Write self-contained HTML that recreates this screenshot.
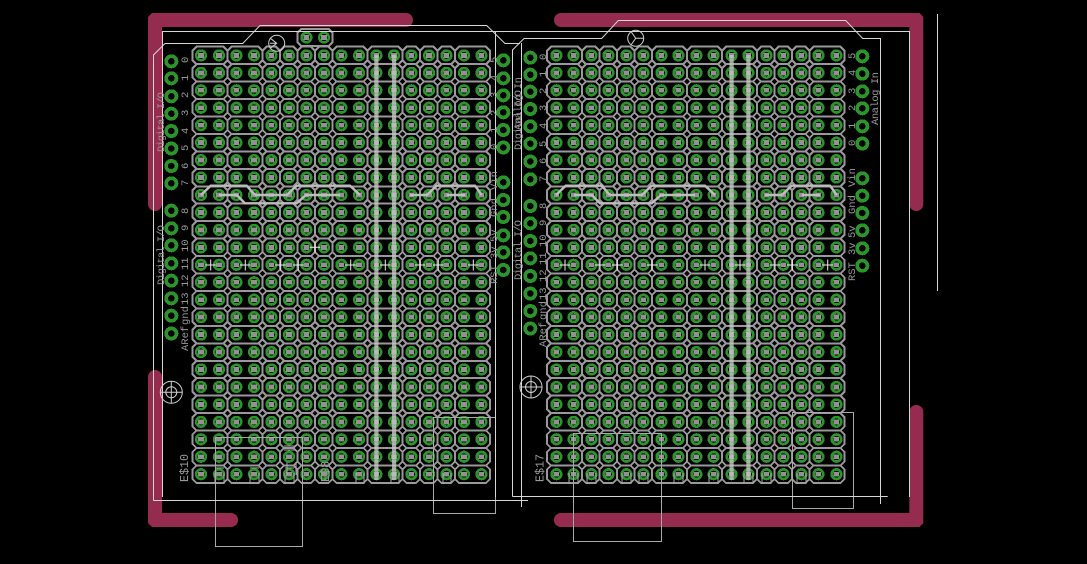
<!DOCTYPE html>
<html>
<head>
<meta charset="utf-8">
<style>
html,body{margin:0;padding:0;background:#000;width:1087px;height:564px;overflow:hidden}
svg{display:block}
text{font-family:"Liberation Mono",monospace;fill:#9a9a9a;font-size:10.5px}
</style>
</head>
<body>
<svg width="1087" height="564" viewBox="0 0 1087 564" xmlns="http://www.w3.org/2000/svg">
<rect width="1087" height="564" fill="#000"/>
<defs>
<g id="p"><circle r="6.1" fill="#2a962a"/><circle r="3.5" fill="#000"/><rect x="-2.8" y="-2.4" width="5.6" height="4.8" fill="#929292"/></g>
<g id="h"><circle r="7" fill="#2a962a"/><circle r="3.3" fill="#000"/></g>
<path id="o2" d="M4-8.725h27l4 4v9.45l-4 4h-27l-4-4v-9.45z" fill="none" stroke="#999" stroke-width="2"/>
<path id="o1" d="M4-8.725h9.5l4 4v9.45l-4 4h-9.5l-4-4v-9.45z" fill="none" stroke="#999" stroke-width="2"/>
<path id="c" d="M-5.5 0h11M0-5.5v11" stroke="#eee" stroke-width="1" fill="none"/>
<g id="row">
<use href="#o2" x="192.5"/><use href="#o2" x="227.5"/><use href="#o1" x="262.5"/><use href="#o1" x="280"/><use href="#o1" x="297.5"/><use href="#o1" x="315"/><use href="#o2" x="332.5"/><use href="#o2" x="367.5"/><use href="#o1" x="402.5"/><use href="#o1" x="420"/><use href="#o1" x="437.5"/><use href="#o2" x="455"/>
<use href="#o2" x="547"/><use href="#o1" x="582"/><use href="#o1" x="599.5"/><use href="#o1" x="617"/><use href="#o1" x="634.5"/><use href="#o2" x="652"/><use href="#o2" x="687"/><use href="#o2" x="722"/><use href="#o1" x="757"/><use href="#o1" x="774.5"/><use href="#o1" x="792"/><use href="#o2" x="809.5"/>
<use href="#p" x="201"/><use href="#p" x="219"/><use href="#p" x="236.4"/><use href="#p" x="254"/><use href="#p" x="271.4"/><use href="#p" x="289"/><use href="#p" x="306.4"/><use href="#p" x="324"/><use href="#p" x="341.4"/><use href="#p" x="359"/><use href="#p" x="376.4"/><use href="#p" x="394"/><use href="#p" x="411.4"/><use href="#p" x="429"/><use href="#p" x="446.4"/><use href="#p" x="464"/><use href="#p" x="481.4"/>
<use href="#p" x="556.4"/><use href="#p" x="573.6"/><use href="#p" x="591.4"/><use href="#p" x="608.4"/><use href="#p" x="626.4"/><use href="#p" x="643.4"/><use href="#p" x="661.4"/><use href="#p" x="678.4"/><use href="#p" x="696.4"/><use href="#p" x="713.6"/><use href="#p" x="731.6"/><use href="#p" x="748.4"/><use href="#p" x="766.4"/><use href="#p" x="783.4"/><use href="#p" x="801.4"/><use href="#p" x="818.4"/><use href="#p" x="836.4"/>
</g>
<g id="wires" fill="none" stroke="#bdbdbd" stroke-width="2.4">
<path d="M201 195L210.7 185.7H246.7L255 195"/>
<path d="M219 195H236.7L245 203.3H296.7L306 195H340"/>
<path d="M255 195H286.7L296.7 185.7H350L360 195"/>
<path d="M410 195H426.7L436.7 185.7H475L481.7 195"/>
<path d="M446.7 195H465"/>
</g>
</defs>

<!-- maroon dimension layer -->
<g fill="none" stroke="#952b4e" stroke-width="14" stroke-linecap="round" stroke-linejoin="miter">
<path d="M155 204V20H406"/>
<path d="M155 377V520H231"/>
<path d="M561 20H916.3V204"/>
<path d="M916.3 412V520H561"/>
</g>
<g fill="#000">
<polygon points="148,13 152,13 148,17"/>
<polygon points="148,527 152,527 148,523"/>
<polygon points="923.5,13 919.5,13 923.5,17"/>
<polygon points="923.5,527 919.5,527 923.5,523"/>
</g>

<!-- board grid -->
<g shape-rendering="crispEdges">
<use href="#row" y="55.4"/><use href="#row" y="72.85"/><use href="#row" y="90.3"/><use href="#row" y="107.75"/><use href="#row" y="125.2"/><use href="#row" y="142.65"/><use href="#row" y="160.1"/><use href="#row" y="177.55"/><use href="#row" y="195"/><use href="#row" y="212.45"/><use href="#row" y="229.9"/><use href="#row" y="247.35"/><use href="#row" y="264.8"/><use href="#row" y="282.25"/><use href="#row" y="299.7"/><use href="#row" y="317.15"/><use href="#row" y="334.6"/><use href="#row" y="352.05"/><use href="#row" y="369.5"/><use href="#row" y="386.95"/><use href="#row" y="404.4"/><use href="#row" y="421.85"/><use href="#row" y="439.3"/><use href="#row" y="456.75"/><use href="#row" y="474.2"/>
<use href="#o2" x="297.5" y="37.5"/><use href="#p" x="306.4" y="37.5"/><use href="#p" x="324" y="37.5"/>

<!-- side pads -->
<use href="#h" x="171.3" y="61.3"/><use href="#h" x="171.3" y="78.3"/><use href="#h" x="171.3" y="96.3"/><use href="#h" x="171.3" y="113.7"/><use href="#h" x="171.3" y="131"/><use href="#h" x="171.3" y="148.5"/><use href="#h" x="171.3" y="166"/><use href="#h" x="171.3" y="183.3"/><use href="#h" x="171.3" y="210.7"/><use href="#h" x="171.3" y="228.3"/><use href="#h" x="171.3" y="245.3"/><use href="#h" x="171.3" y="263.3"/><use href="#h" x="171.3" y="280.7"/><use href="#h" x="171.3" y="298.3"/><use href="#h" x="171.3" y="315.7"/><use href="#h" x="171.3" y="333.5"/>
<use href="#h" x="503.3" y="60.3"/><use href="#h" x="503.3" y="78.3"/><use href="#h" x="503.3" y="95.3"/><use href="#h" x="503.3" y="112.3"/><use href="#h" x="503.3" y="130"/><use href="#h" x="503.3" y="147.5"/><use href="#h" x="503.3" y="182.3"/><use href="#h" x="503.3" y="200"/><use href="#h" x="503.3" y="217"/><use href="#h" x="503.3" y="235.3"/><use href="#h" x="503.3" y="252.3"/><use href="#h" x="503.3" y="270"/>
<use href="#h" x="530.3" y="57.7"/><use href="#h" x="530.3" y="74.7"/><use href="#h" x="530.3" y="91.7"/><use href="#h" x="530.3" y="109"/><use href="#h" x="530.3" y="126.3"/><use href="#h" x="530.3" y="143.7"/><use href="#h" x="530.3" y="161.5"/><use href="#h" x="530.3" y="179.3"/><use href="#h" x="530.3" y="206"/><use href="#h" x="530.3" y="223.3"/><use href="#h" x="530.3" y="241"/><use href="#h" x="530.3" y="258.3"/><use href="#h" x="530.3" y="276"/><use href="#h" x="530.3" y="293.5"/><use href="#h" x="530.3" y="311"/><use href="#h" x="530.3" y="328.5"/>
<use href="#h" x="862.3" y="56.3"/><use href="#h" x="862.3" y="73.7"/><use href="#h" x="862.3" y="91.3"/><use href="#h" x="862.3" y="108.3"/><use href="#h" x="862.3" y="126.3"/><use href="#h" x="862.3" y="143.5"/><use href="#h" x="862.3" y="178.3"/><use href="#h" x="862.3" y="195.7"/><use href="#h" x="862.3" y="213"/><use href="#h" x="862.3" y="230.3"/><use href="#h" x="862.3" y="248.3"/><use href="#h" x="862.3" y="265.7"/>
</g>

<!-- thick wires -->
<g fill="#c4c4c4" fill-opacity=".8">
<rect x="374.3" y="55" width="4.2" height="425"/>
<rect x="392" y="55" width="4.2" height="425"/>
<rect x="729.5" y="55" width="4.2" height="425"/>
<rect x="746.3" y="55" width="4.2" height="425"/>
</g>
<use href="#wires"/>
<use href="#wires" x="355"/>

<!-- crosses -->
<use href="#c" x="315" y="247.3"/>
<use href="#c" x="210.7" y="265"/><use href="#c" x="245.3" y="265"/><use href="#c" x="280.7" y="265"/><use href="#c" x="298.3" y="265"/><use href="#c" x="350.7" y="265"/><use href="#c" x="385.3" y="265"/><use href="#c" x="420" y="265"/><use href="#c" x="438.3" y="265"/><use href="#c" x="473.3" y="265"/>
<use href="#c" x="565" y="265"/><use href="#c" x="600" y="265"/><use href="#c" x="617.3" y="265"/><use href="#c" x="652" y="265"/><use href="#c" x="705" y="265"/><use href="#c" x="740" y="265"/><use href="#c" x="775" y="265"/><use href="#c" x="792.3" y="265"/><use href="#c" x="827.7" y="265"/>

<!-- component rectangles -->
<g fill="none" stroke="#a8a8a8" stroke-width="1">
<rect x="215.5" y="437.5" width="87" height="109"/>
<rect x="433.5" y="417.5" width="62" height="96"/>
<rect x="573.5" y="433.5" width="88" height="108"/>
<rect x="792.5" y="412.5" width="61" height="96"/>
</g>

<!-- thin outline lines -->
<g fill="none" stroke="#d6d6d6" stroke-width="1">
<path d="M162.5 497V31.5H909.5V497"/>
<path d="M153.5 500.5V55L165 43.5H242.7L260 25.5H486.7L505 43.5H520"/>
<path d="M153.5 500.5H528"/>
<path d="M495.5 32V497"/>
<path d="M521.5 43V507"/>
<path d="M512.5 496.5V50L524 38.5H601.7L618.3 20.5H845.7L862.7 38.5H880.5V504"/>
<path d="M512.5 496.5H887.7"/>
<path d="M937.5 14V291"/>
</g>

<!-- drill holes -->
<g fill="none" stroke="#cfcfcf" stroke-width="1">
<circle cx="171.3" cy="392.3" r="11"/><circle cx="171.3" cy="392.3" r="5.5"/><path d="M160 392.3H182.6M171.3 381V403.6"/>
<circle cx="531" cy="387" r="11"/><circle cx="531" cy="387" r="5.5"/><path d="M519.7 387H542.3M531 375.7V398.3"/>
<circle cx="276.7" cy="43.3" r="8"/><path d="M270 38L276.7 43.3L270 48.5M276.7 43.3L270 43.3"/>
<circle cx="635.7" cy="38.3" r="8"/><path d="M635.7 38.3L631 31.5M635.7 38.3L643.5 38.3M635.7 38.3L631 45"/>
</g>

<!-- labels: left board -->
<g>
<text transform="translate(164,152) rotate(-90)" textLength="60">Digital I/O</text>
<text transform="translate(164,285) rotate(-90)" textLength="60">Digital I/O</text>
<text transform="translate(188,63) rotate(-90)">0</text>
<text transform="translate(188,81) rotate(-90)">1</text>
<text transform="translate(188,98) rotate(-90)">2</text>
<text transform="translate(188,116) rotate(-90)">3</text>
<text transform="translate(188,134) rotate(-90)">4</text>
<text transform="translate(188,151) rotate(-90)">5</text>
<text transform="translate(188,169) rotate(-90)">6</text>
<text transform="translate(188,186) rotate(-90)">7</text>
<text transform="translate(188,214) rotate(-90)">8</text>
<text transform="translate(188,231) rotate(-90)">9</text>
<text transform="translate(188,252) rotate(-90)">10</text>
<text transform="translate(188,270) rotate(-90)">11</text>
<text transform="translate(188,287) rotate(-90)">12</text>
<text transform="translate(188,305) rotate(-90)">13</text>
<text transform="translate(188,325) rotate(-90)">gnd</text>
<text transform="translate(188,351) rotate(-90)">ARef</text>
<text transform="translate(188,482) rotate(-90)" style="font-size:11.7px">E$10</text>
<text transform="translate(329,482) rotate(-90)" style="font-size:11.7px">E$8</text>

<text transform="translate(497,63) rotate(-90)">5</text>
<text transform="translate(497,81) rotate(-90)">4</text>
<text transform="translate(497,98) rotate(-90)">3</text>
<text transform="translate(497,116) rotate(-90)">2</text>
<text transform="translate(497,133) rotate(-90)">1</text>
<text transform="translate(497,150) rotate(-90)">0</text>
<text transform="translate(497,190) rotate(-90)">Vin</text>
<text transform="translate(497,217) rotate(-90)">Gnd</text>
<text transform="translate(497,242) rotate(-90)">5v</text>
<text transform="translate(497,259) rotate(-90)">3v</text>
<text transform="translate(497,284) rotate(-90)">RST</text>
<text transform="translate(521,130) rotate(-90)" textLength="53">Analog In</text>

<!-- labels: right board -->
<text transform="translate(521,150) rotate(-90)" textLength="60">Digital I/O</text>
<text transform="translate(521,280) rotate(-90)" textLength="60">Digital I/O</text>
<text transform="translate(546,60) rotate(-90)">0</text>
<text transform="translate(546,77) rotate(-90)">1</text>
<text transform="translate(546,94) rotate(-90)">2</text>
<text transform="translate(546,111) rotate(-90)">3</text>
<text transform="translate(546,129) rotate(-90)">4</text>
<text transform="translate(546,147) rotate(-90)">5</text>
<text transform="translate(546,164) rotate(-90)">6</text>
<text transform="translate(546,182) rotate(-90)">7</text>
<text transform="translate(546,209) rotate(-90)">8</text>
<text transform="translate(546,226) rotate(-90)">9</text>
<text transform="translate(546,247) rotate(-90)">10</text>
<text transform="translate(546,265) rotate(-90)">11</text>
<text transform="translate(546,282) rotate(-90)">12</text>
<text transform="translate(546,300) rotate(-90)">13</text>
<text transform="translate(546,320) rotate(-90)">gnd</text>
<text transform="translate(546,347) rotate(-90)">ARef</text>
<text transform="translate(543.5,482) rotate(-90)" style="font-size:11.7px">E$17</text>

<text transform="translate(855,59) rotate(-90)">5</text>
<text transform="translate(855,76) rotate(-90)">4</text>
<text transform="translate(855,94) rotate(-90)">3</text>
<text transform="translate(855,111) rotate(-90)">2</text>
<text transform="translate(855,129) rotate(-90)">1</text>
<text transform="translate(855,146) rotate(-90)">0</text>
<text transform="translate(855,187) rotate(-90)">Vin</text>
<text transform="translate(855,214) rotate(-90)">Gnd</text>
<text transform="translate(855,238) rotate(-90)">5v</text>
<text transform="translate(855,255) rotate(-90)">3v</text>
<text transform="translate(855,281) rotate(-90)">RST</text>
<text transform="translate(878,125) rotate(-90)" textLength="53">Analog In</text>
</g>

<!-- small component marks -->
<g fill="none" stroke="#a8a8a8" stroke-width="1">
<path d="M215 473V484M224 473V484M215 468H224M250 473V484M259 473V484M250 468H259M285 473V484M294 473V484M285 468H294"/>
<path d="M284 446H296M284 450H296M287 462V475M296 462V475"/>
<path d="M356 473V484M364 473V484M391 473V484M399 473V484M443 473V484M451 473V484"/>
<path d="M569 473V484M578 473V484M587 473V484M596 473V484M622 473V484M631 473V484M639 473V484M648 473V484M674 473V484M683 473V484M709 473V484M718 473V484M744 473V484M753 473V484M762 473V484M771 473V484M797 473V484M806 473V484"/>
</g>
</svg>
</body>
</html>
